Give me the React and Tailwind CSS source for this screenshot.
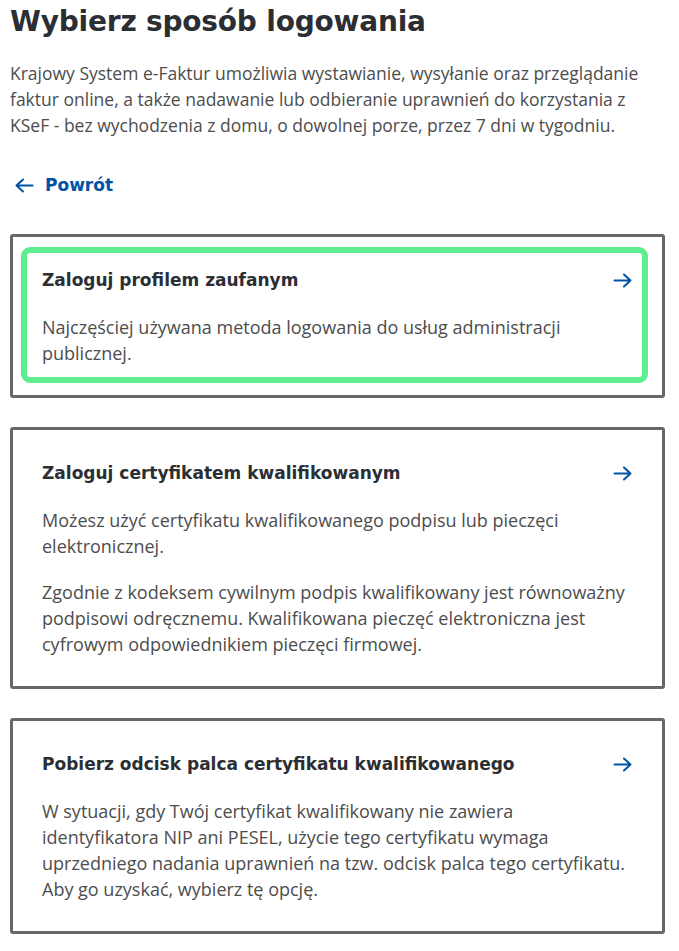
const options = [
    {
        title: 'Zaloguj profilem zaufanym',
        paragraphs: ['Najczęściej używana metoda logowania do usług administracji publicznej.'],
        focused: true
    },
    {
        title: 'Zaloguj certyfikatem kwalifikowanym',
        paragraphs: [
            'Możesz użyć certyfikatu kwalifikowanego podpisu lub pieczęci elektronicznej.',
            'Zgodnie z kodeksem cywilnym podpis kwalifikowany jest równoważny podpisowi odręcznemu. Kwalifikowana pieczęć elektroniczna jest cyfrowym odpowiednikiem pieczęci firmowej.'
        ]
    },
    {
        title: 'Pobierz odcisk palca certyfikatu kwalifikowanego',
        paragraphs: [
            'W sytuacji, gdy Twój certyfikat kwalifikowany nie zawiera identyfikatora NIP ani PESEL, użycie tego certyfikatu wymaga uprzedniego nadania uprawnień na tzw. odcisk palca tego certyfikatu. Aby go uzyskać, wybierz tę opcję.'
        ]
    }
]

const heading = { fontFamily: '"DejaVu Sans", "Liberation Sans", sans-serif' }

function Arrow({ left = false }) {
    return (
        <svg width="19" height="15" viewBox="0 0 19 15" fill="none" stroke="currentColor" strokeWidth="2" strokeLinecap="round" strokeLinejoin="round" className={left ? 'rotate-180 shrink-0' : 'shrink-0'}>
            <path d="M1.5 7.5h16M11 1.5l6.5 6-6.5 6" />
        </svg>
    )
}

export default function App() {
    return (
        <div className="min-h-screen bg-white pl-[10px] pr-[14px] pt-[4px] pb-4" style={{ fontFamily: '"Open Sans", "Liberation Sans", sans-serif' }}>
            <h1 className="text-[28px] leading-[36px] font-bold text-[#2b2e33] tracking-[-0.2px]" style={heading}>
                Wybierz sposób logowania
            </h1>
            <p className="mt-[20px] text-[17.5px] leading-[26px] text-[#4d4d4d] pr-2">
                Krajowy System e-Faktur umożliwia wystawianie, wysyłanie oraz przeglądanie faktur online, a także nadawanie lub odbieranie uprawnień do korzystania z KSeF - bez wychodzenia z domu, o dowolnej porze, przez 7 dni w tygodniu.
            </p>

            <a href="#" className="mt-[35px] flex items-center gap-[11px] pl-[5px] text-[17px] leading-[24px] font-bold text-[#0052a5]" style={heading}>
                <Arrow left />
                <span>Powrót</span>
            </a>

            <div className="mt-[37px] flex flex-col gap-[29px]">
                {options.map((opt) => (
                    <div key={opt.title} className="relative rounded-[3px] border-[3px] border-[#676767] bg-white pl-[29px] pr-[30px] pt-[31px] pb-[29px]">
                        {opt.focused && (
                            <div className="pointer-events-none absolute top-[10px] left-[8px] right-[14px] bottom-[12px] rounded-[9px] border-[6px] border-[#5eee8f]" />
                        )}
                        <div className="flex items-center justify-between">
                            <h2 className="text-[17px] leading-[24px] font-bold text-[#2b2e33]" style={heading}>{opt.title}</h2>
                            <span className="text-[#0052a5]"><Arrow /></span>
                        </div>
                        <div className="mt-[22px] flex flex-col gap-[20px]">
                            {opt.paragraphs.map((p, i) => (
                                <p key={i} className="text-[18px] leading-[26px] text-[#4d4d4d]">{p}</p>
                            ))}
                        </div>
                    </div>
                ))}
            </div>
        </div>
    )
}
